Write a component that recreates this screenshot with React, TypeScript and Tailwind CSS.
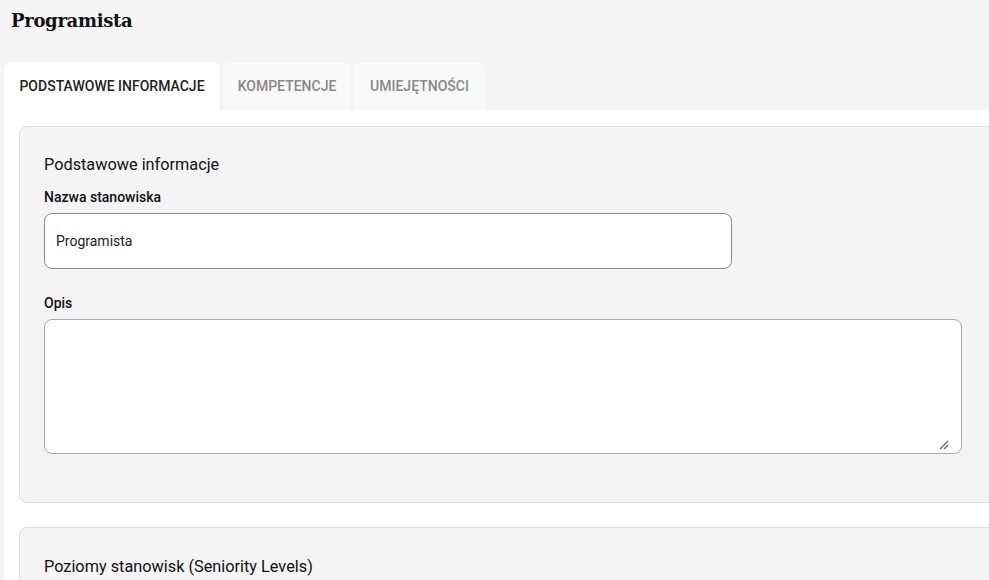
import React from "react";

export default function App() {
  return (
    <div
      className="w-[989px] h-[580px] overflow-hidden bg-[#f4f4f4]"
      style={{ fontFamily: "Roboto, 'Noto Sans', sans-serif" }}
    >
      <div className="w-[1040px]">
        <h1
          className="pl-[11px] pt-[9px] h-[62px] text-[18px] font-bold text-[#111] leading-[24px]"
          style={{ fontFamily: "'DejaVu Serif', 'Liberation Serif', serif", letterSpacing: "-0.3px" }}
        >
          Programista
        </h1>
        <div className="flex pl-[4px] gap-[3px] h-[48px]">
          <div className="w-[216px] bg-white rounded-t-[8px] flex items-center justify-center text-[14px] font-medium text-[#222] uppercase">
            Podstawowe informacje
          </div>
          <div className="w-[128px] bg-[#f9f9f9] rounded-t-[8px] flex items-center justify-center text-[14px] font-medium text-[#888] uppercase">
            Kompetencje
          </div>
          <div className="w-[131px] bg-[#f9f9f9] rounded-t-[8px] flex items-center justify-center text-[14px] font-medium text-[#888] uppercase">
            Umiejętności
          </div>
        </div>
        <div className="ml-[4px] bg-white pt-[16px] pl-[15px] pr-[15px] pb-[24px] flex flex-col gap-[24px]">
          <div className="w-[1000px] bg-[#f4f4f4] border border-[#dddddd] rounded-[8px] pl-[24px] pt-[28px] pb-[48px]">
            <div className="text-[16.3px] text-[#111] leading-[20px]">Podstawowe informacje</div>
            <div className="mt-[14px] text-[14px] font-medium text-[#111] leading-[16px]">Nazwa stanowiska</div>
            <div className="mt-[8px] w-[688px] h-[56px] bg-white border border-[#8a8a8a] rounded-[8px] flex items-center pl-[11px] text-[14px] text-[#222]">
              Programista
            </div>
            <div className="mt-[26px] text-[14px] font-medium text-[#111] leading-[16px]">Opis</div>
            <div className="mt-[8px] relative w-[918px] h-[135px] bg-white border border-[#aaaaaa] rounded-[8px]">
              <svg className="absolute right-[12px] bottom-[3px]" width="10" height="10" viewBox="0 0 10 10">
                <path d="M1 9 L9 1 M5 9 L9 5" stroke="#666" strokeWidth="1.2" fill="none" />
              </svg>
            </div>
          </div>
          <div className="w-[1000px] h-[120px] bg-[#f4f4f4] border border-[#dddddd] rounded-[8px] pl-[24px] pt-[29px]">
            <div className="text-[16.3px] text-[#111] leading-[20px]">Poziomy stanowisk (Seniority Levels)</div>
          </div>
        </div>
      </div>
    </div>
  );
}
